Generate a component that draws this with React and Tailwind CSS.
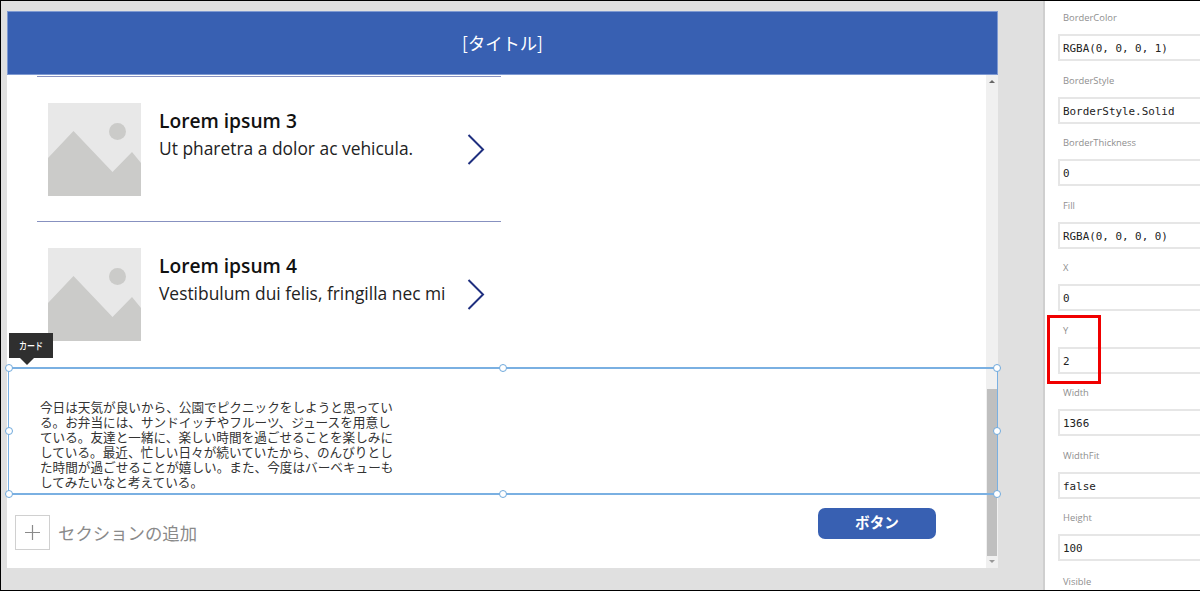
const CJK = "font-['Noto_Sans_CJK_JP',sans-serif]"

const rows = [
  { title: 'Lorem ipsum 3', sub: 'Ut pharetra a dolor ac vehicula.' },
  { title: 'Lorem ipsum 4', sub: 'Vestibulum dui felis, fringilla nec mi' },
]

const fields = [
  ['BorderColor', 'RGBA(0, 0, 0, 1)'],
  ['BorderStyle', 'BorderStyle.Solid'],
  ['BorderThickness', '0'],
  ['Fill', 'RGBA(0, 0, 0, 0)'],
  ['X', '0'],
  ['Y', '2'],
  ['Width', '1366'],
  ['WidthFit', 'false'],
  ['Height', '100'],
]

function Placeholder() {
  return (
    <svg width="93" height="93" viewBox="0 0 93 93" className="shrink-0">
      <rect width="93" height="93" fill="#e8e8e8" />
      <circle cx="69.5" cy="28.5" r="8.5" fill="#cbcbc9" />
      <path d="M0 55 L25.500 28 L64.500 69 L84 49 L93 60 V93 H0 Z" fill="#cbcbc9" />
    </svg>
  )
}

function Handle({ className }) {
  return <span className={`absolute w-[8px] h-[8px] rounded-full bg-white border-[1.5px] border-[#6fa9dc] ${className}`} />
}

function ListRow({ title, sub }) {
  return (
    <div className="ml-[30px] w-[464px] border-t border-[#8791c0] pt-[26px] pb-[25px] pl-[11px] flex items-start">
      <Placeholder />
      <div className="ml-[18px] w-[308px] pt-[5px]">
        <div className="font-['Open_Sans'] font-semibold text-[19.200px] leading-[26px] text-[#111]">{title}</div>
        <div className="font-['Open_Sans'] text-[17.400px] leading-[28px] text-[#222] whitespace-nowrap">{sub}</div>
      </div>
      <svg width="18" height="31" viewBox="0 0 18 31" className="shrink-0 self-center">
        <path d="M1.500 1 L16 15.500 L1.500 30" fill="none" stroke="#1f2f7f" strokeWidth="2" />
      </svg>
    </div>
  )
}

export default function App() {
  return (
    <div className="w-[1200px] h-[591px] overflow-hidden bg-[#e0e0e0] border-t border-l border-b border-black flex">
      <div className="w-[1042px] pt-[10px] pl-[6px]">
        <div className="w-[991px] h-[557px] bg-white flex flex-col">
          <div className={`h-[64px] bg-[#3860b2] text-white text-[17.300px] flex items-center justify-center shrink-0 border border-[#7f9ad2] ${CJK}`}>
            [タイトル]
          </div>
          <div className="flex-1 flex min-h-0">
            <div className="w-[979px] pt-[1px] flex flex-col">
              {rows.map((r) => <ListRow key={r.title} {...r} />)}
              <div className="relative w-[990px] ml-[1px] mt-[1px] h-[128px] shrink-0 border-x border-y-2 border-[#7ab0e2] pl-[31px] pt-[30px]">
                <p className={`w-[356px] text-[12.640px] leading-[15px] text-[#333] ${CJK}`}>
                  今日は天気が良いから、公園でピクニックをしようと思っている。お弁当には、サンドイッチやフルーツ、ジュースを用意している。友達と一緒に、楽しい時間を過ごせることを楽しみにしている。最近、忙しい日々が続いていたから、のんびりとした時間が過ごせることが嬉しい。また、今度はバーベキューもしてみたいなと考えている。
                </p>
                <Handle className="-left-[4px] -top-[5px]" />
                <Handle className="left-[490px] -top-[5px]" />
                <Handle className="-right-[4px] -top-[5px]" />
                <Handle className="-left-[4px] top-[58px]" />
                <Handle className="-right-[4px] top-[58px]" />
                <Handle className="-left-[4px] -bottom-[5px]" />
                <Handle className="left-[490px] -bottom-[5px]" />
                <Handle className="-right-[4px] -bottom-[5px]" />
                <div className={`absolute left-0 -top-[36px] w-[44px] h-[25px] bg-[#2f2f2f] text-white font-medium text-[8px] flex items-center justify-center ${CJK}`}>
                  <span className="scale-y-125">カード</span>
                  <span className="absolute left-[11px] top-[25px] w-0 h-0 border-x-[7px] border-x-transparent border-t-[7px] border-t-[#2f2f2f]" />
                </div>
              </div>
              <div className="flex-1 flex justify-between">
                <div className="flex items-start pl-[8px] pt-[20px]">
                  <div className="w-[35px] h-[35px] border border-[#d0d0d0] flex items-center justify-center">
                    <svg width="15" height="15" viewBox="0 0 15 15"><path d="M7.500 0V15M0 7.500H15" stroke="#8a8a8a" strokeWidth="1.200" /></svg>
                  </div>
                  <span className={`ml-[8px] text-[17.400px] leading-[35px] text-[#8a8a8a] ${CJK}`}>セクションの追加</span>
                </div>
                <div className="pt-[13px] pr-[50px]">
                  <button className={`w-[118px] h-[31px] rounded-[7px] bg-[#3860b2] text-white font-bold text-[14.600px] leading-[27px] pb-[4px] ${CJK}`}>ボタン</button>
                </div>
              </div>
            </div>
            {/* scroll bar */}
            <div className="w-[12px] bg-[#f0f0f0] flex flex-col items-center">
              <div className="h-[314px] w-full flex justify-center pt-[5px]">
                <div className="w-0 h-0 border-x-[3px] border-x-transparent border-b-[3px] border-b-[#666]" />
              </div>
              <div className="h-[167px] w-[10px] bg-[#bfbfbf]" />
              <div className="mt-[4px] w-0 h-0 border-x-[3px] border-x-transparent border-t-[3px] border-t-[#999]" />
            </div>
          </div>
        </div>
      </div>
      <div className="w-[157px] bg-white border-l-2 border-[#cfcfcf] pl-[13px] relative">
        {fields.map(([label, value]) => (
          <div key={label} className="h-[62.500px]">
            <div className="h-[22px] pt-[10px] pl-[5px] font-['Open_Sans'] text-[9.400px] leading-[14px] text-[#8f8f8f]">{label}</div>
            <div className="mt-[11px] h-[27px] border-2 border-r-0 border-[#e6e6e6] pl-[3px] font-['DejaVu_Sans_Mono'] text-[10.900px] leading-[25px] text-[#222] whitespace-nowrap">{value}</div>
          </div>
        ))}
        <div className="pl-[5px] pt-[11px] font-['Open_Sans'] text-[9.400px] leading-[14px] text-[#8f8f8f]">Visible</div>
        <div className="absolute left-[2px] top-[314px] w-[54px] h-[69px] border-[3px] border-[#f00000]" />
      </div>
    </div>
  )
}
